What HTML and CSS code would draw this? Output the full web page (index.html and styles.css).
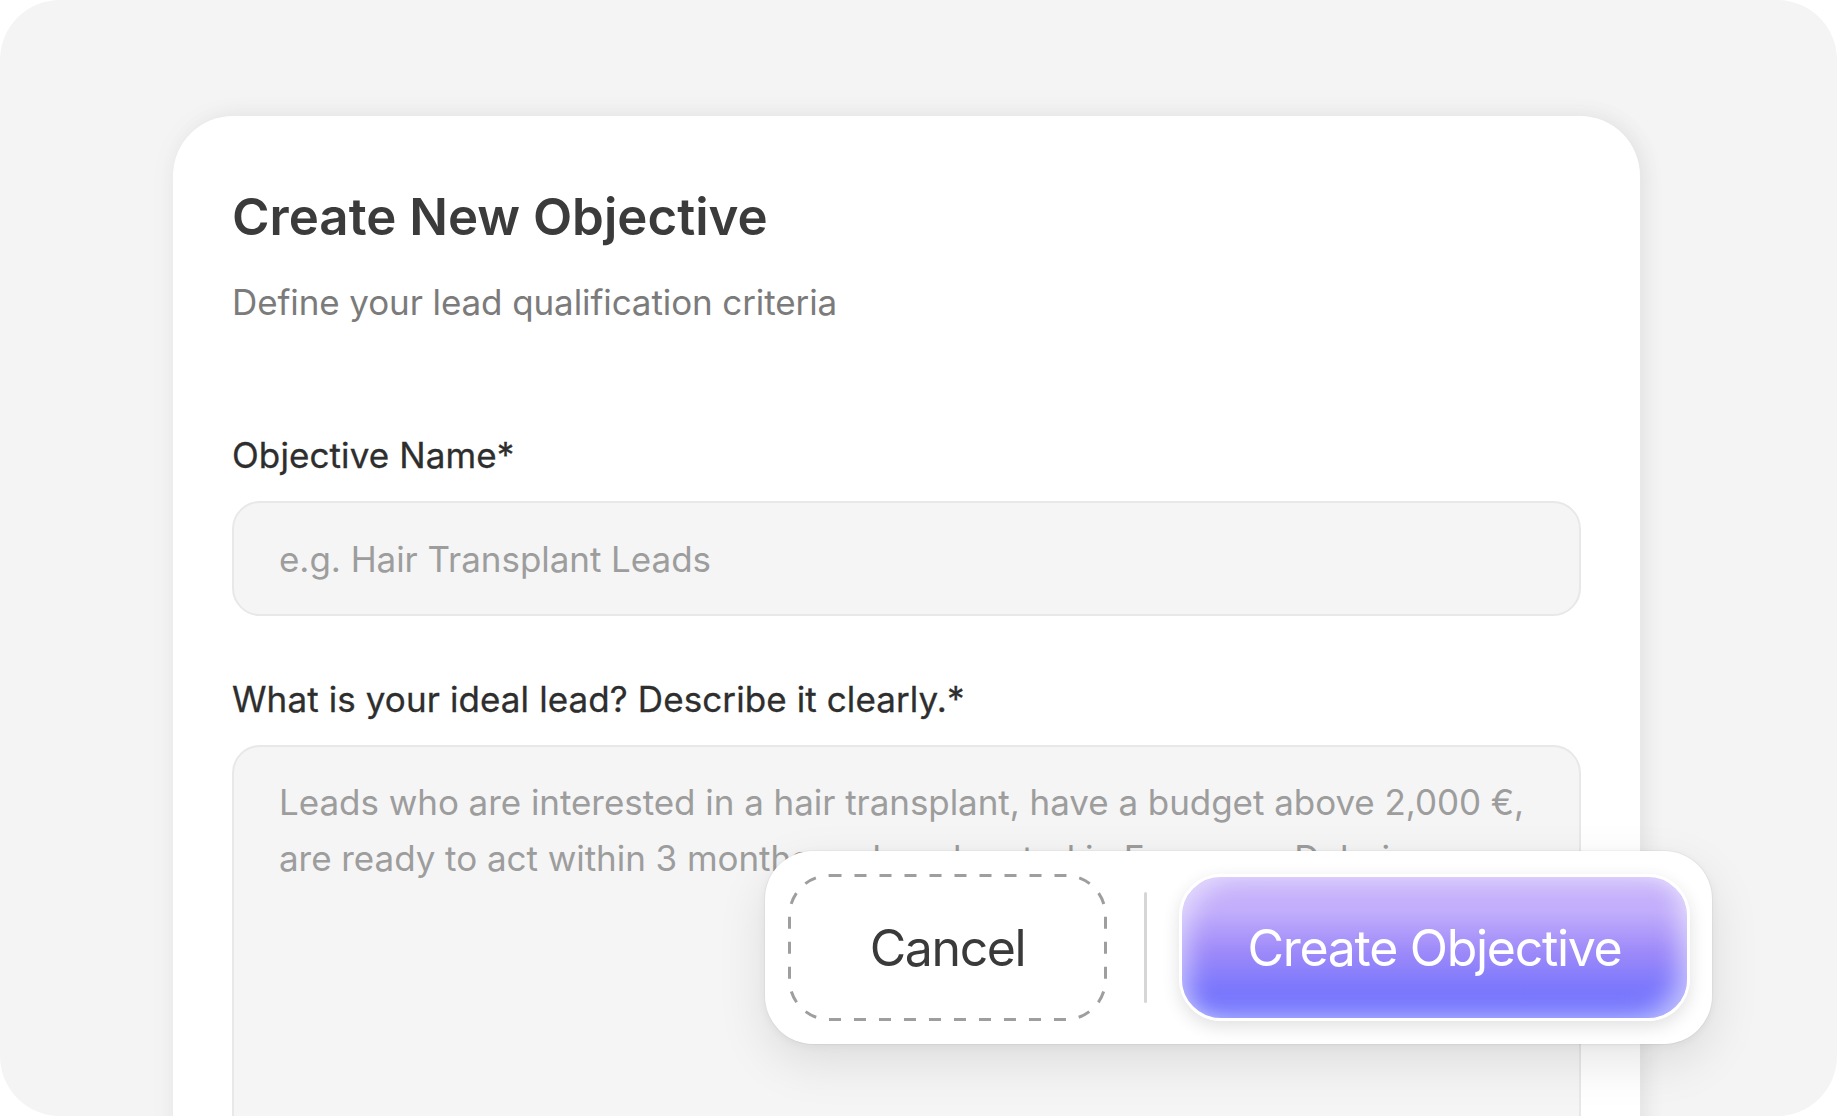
FILE: index.html
```html
<!DOCTYPE html>
<html lang="en">
<head>
<meta charset="utf-8">
<title>Create New Objective</title>
<link rel="stylesheet" href="styles.css">
</head>
<body>
<div class="frame">
  <section class="card">
    <h1 class="title">Create New Objective</h1>
    <p class="subtitle">Define your lead qualification criteria</p>
    <div class="fields">
      <label class="field">
        <span class="label">Objective Name*</span>
        <input class="input" type="text" placeholder="e.g. Hair Transplant Leads">
      </label>
      <label class="field">
        <span class="label">What is your ideal lead? Describe it clearly.*</span>
        <textarea class="textarea" placeholder="Leads who are interested in a hair transplant, have a budget above 2,000 €,&#10;are ready to act within 3 months and are located in Europe or Dubai."></textarea>
      </label>
    </div>
  </section>
  <div class="actions">
    <button class="btn-cancel" type="button">
      <svg class="dash" width="319" height="147" viewBox="0 0 319 147" aria-hidden="true"><rect x="1.5" y="1.5" width="316" height="144" rx="40" ry="40"/></svg>
      <span>Cancel</span>
    </button>
    <span class="sep"></span>
    <button class="btn-create" type="button">Create Objective</button>
  </div>
</div>
</body>
</html>
```
FILE: styles.css
```css
* { box-sizing: border-box; }
html, body { margin: 0; padding: 0; background: #ffffff; }
body {
  width: 1840px;
  height: 1120px;
  font-family: Inter, "Noto Sans", sans-serif;
  overflow: hidden;
}
.frame {
  position: relative;
  width: 1837px;
  height: 1116px;
  border-radius: 60px;
  background: #f4f4f4;
  overflow: hidden;
  padding: 116px 0 0 173px;
}
.card {
  width: 1467px;
  height: 1100px;
  background: #ffffff;
  border-radius: 60px;
  padding: 71px 59px 0 59px;
  box-shadow: 0 0 30px rgba(0,0,0,0.04), 6px 0 22px rgba(0,0,0,0.05);
}
.title {
  margin: 0;
  font-size: 51px;
  line-height: 60px;
  font-weight: 600;
  color: #3b3b3b;
  letter-spacing: 0;
}
.subtitle {
  margin: 33px 0 0 0;
  font-size: 35px;
  line-height: 44px;
  font-weight: 400;
  color: #7b7b7b;
  letter-spacing: -0.1px;
}
.fields {
  margin-top: 109px;
  display: flex;
  flex-direction: column;
  gap: 61px;
}
.field {
  display: flex;
  flex-direction: column;
  gap: 24px;
}
.label {
  font-size: 35px;
  line-height: 44px;
  font-weight: 400;
  color: #2e2e2e;
  letter-spacing: 0.1px;
  -webkit-text-stroke: 0.3px #2e2e2e;
}
.input, .textarea {
  display: block;
  width: 100%;
  font-family: inherit;
  font-size: 35px;
  letter-spacing: -0.05px;
  color: #333;
  background: #f5f5f5;
  border: 2px solid #e8e8e8;
  border-radius: 28px;
  outline: none;
}
.input {
  height: 115px;
  padding: 0 45px;
}
.textarea {
  height: 420px;
  padding: 27px 45px;
  line-height: 56px;
  resize: none;
  overflow: hidden;
}
.input::placeholder, .textarea::placeholder {
  color: #9d9d9d;
  opacity: 1;
}
.actions {
  position: absolute;
  left: 765px;
  top: 851px;
  width: 947px;
  height: 193px;
  background: #ffffff;
  border-radius: 48px;
  padding: 23px 25px 23px 23px;
  display: flex;
  align-items: center;
  box-shadow: 0 18px 50px rgba(0,0,0,0.10), 0 2px 10px rgba(0,0,0,0.05), 0 0 0 1px rgba(0,0,0,0.03);
}
.btn-cancel {
  position: relative;
  width: 319px;
  height: 147px;
  flex: none;
  border: none;
  background: transparent;
  padding: 0;
  font-family: inherit;
  font-size: 50px;
  font-weight: 400;
  color: #3a3a3a;
  letter-spacing: -1.4px;
  display: flex;
  align-items: center;
  justify-content: center;
}
.dash {
  position: absolute;
  left: 0;
  top: 0;
}
.dash rect {
  fill: none;
  stroke: #9e9e9e;
  stroke-width: 3;
  stroke-dasharray: 12 13;
}
.btn-cancel span { position: relative; }
.sep {
  flex: none;
  width: 3px;
  height: 111px;
  margin: 0 32px 0 37px;
  background: #d6d6d6;
  border-radius: 2px;
}
.btn-create {
  flex: none;
  width: 511px;
  height: 147px;
  border: 3px solid #ffffff;
  border-radius: 42px;
  font-family: inherit;
  font-size: 50px;
  font-weight: 400;
  color: #ffffff;
  letter-spacing: -1.3px;
  background: linear-gradient(180deg, #cab6fb 0%, #c1adfb 25%, #9f8bf9 52%, #7f79fc 76%, #6a6ffe 100%);
  box-shadow: inset 16px 10px 24px -8px rgba(255,255,255,0.5), inset -16px -10px 24px -8px rgba(255,255,255,0.55), 0 6px 18px rgba(0,0,0,0.12);
}
```
